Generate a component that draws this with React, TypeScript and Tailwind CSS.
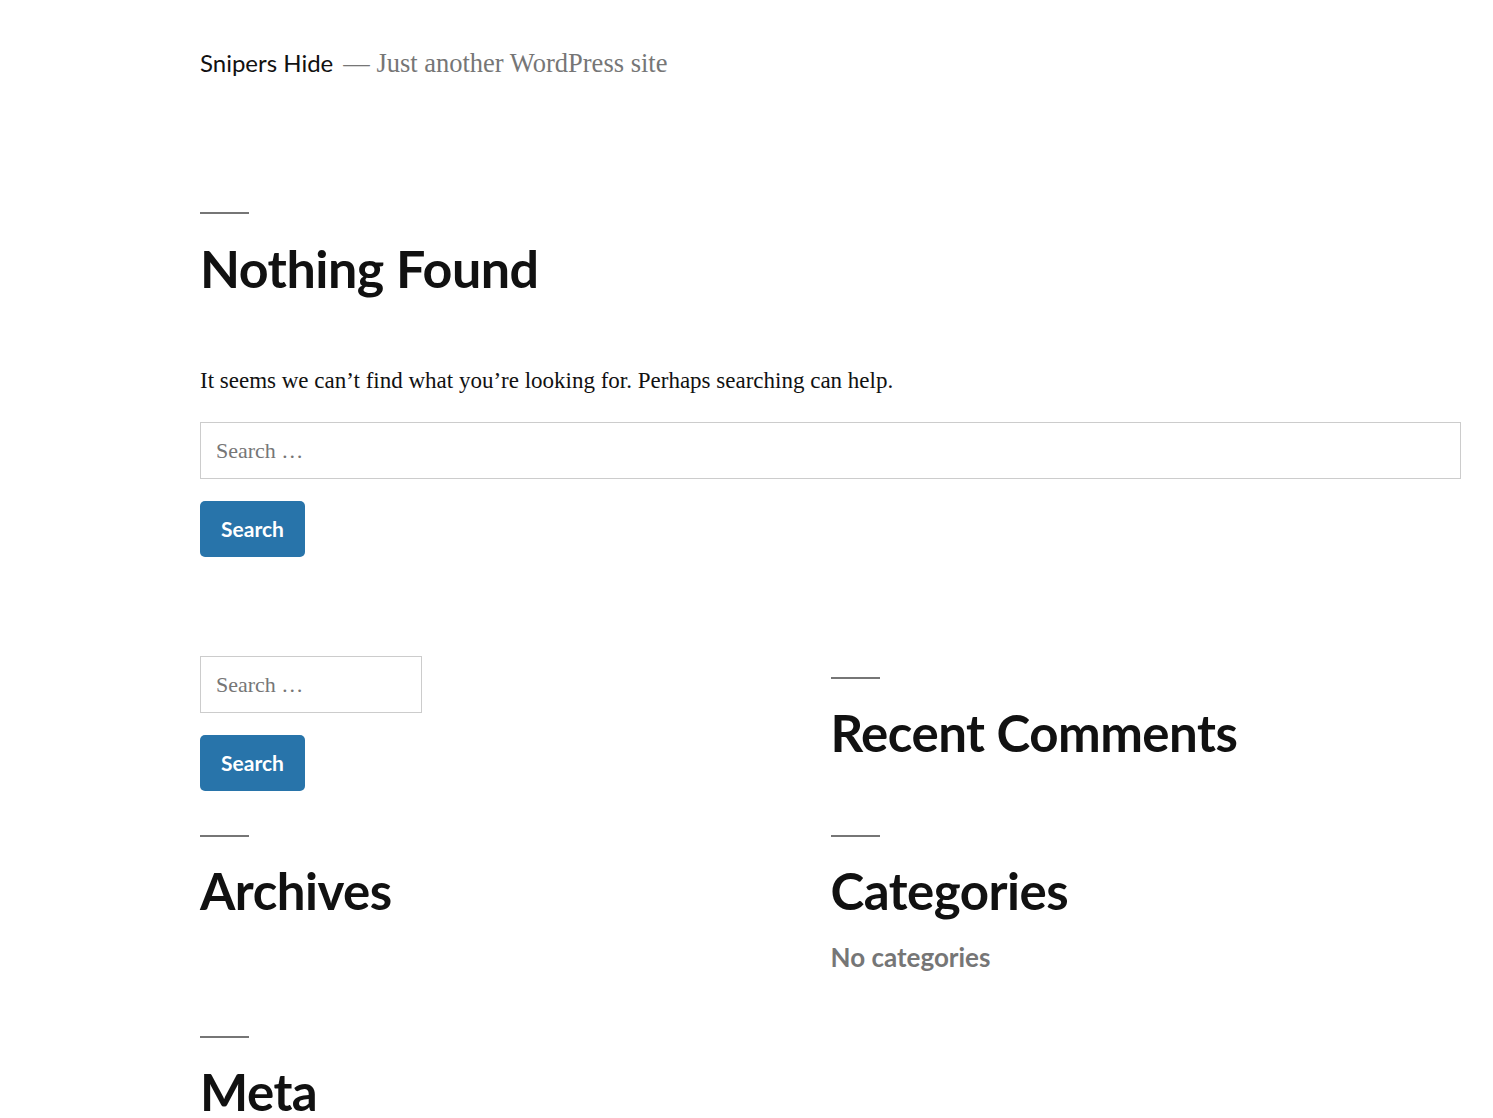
import React from "react";

const sans = "font-['Lato','Open_Sans',sans-serif]";
const serif = "font-['Liberation_Serif','Times_New_Roman',serif]";

function Rule() {
  return <div className="h-[2px] w-[49px] bg-[#767676]" />;
}

function WidgetTitle({ children }: { children: React.ReactNode }) {
  return (
    <h2 className={`${sans} mt-[24px] h-[60px] text-[51px] font-bold leading-[60px] text-[#111111] tracking-[-0.5px]`}>
      {children}
    </h2>
  );
}

function SearchForm({ full }: { full?: boolean }) {
  return (
    <form className="flex flex-col items-start" onSubmit={(e) => e.preventDefault()}>
      <input
        type="search"
        placeholder="Search …"
        className={`${serif} h-[57px] ${full ? "w-full" : "w-[222px]"} border border-[#cccccc] bg-white px-[15px] text-[22px] text-[#111] placeholder:text-[#767676] outline-none`}
      />
      <button
        type="submit"
        className={`${sans} mt-[22px] h-[56px] w-[105px] rounded-[5px] bg-[#2874aa] text-[21px] font-bold text-white`}
      >
        Search
      </button>
    </form>
  );
}

export default function App() {
  return (
    <div className="min-h-[1118px] w-full bg-white pl-[200px] pr-[32px]">
      <header className="pt-[47px]">
        <p className="flex items-baseline leading-[32px]">
          <span className={`${sans} text-[24px] text-[#111111]`}>Snipers Hide</span>
          <span className={`${serif} ml-[10px] text-[26.5px] text-[#767676]`}>— Just another WordPress site</span>
        </p>
      </header>

      <main>
        <div className="mt-[133px]">
          <Rule />
        </div>
        <h1 className={`${sans} mt-[24px] h-[60px] text-[52px] font-bold leading-[60px] text-[#111111] tracking-[-0.5px]`}>
          Nothing Found
        </h1>
        <p className={`${serif} mt-[67px] text-[23px] leading-[32px] text-[#111111]`}>
          It seems we can’t find what you’re looking for. Perhaps searching can help.
        </p>
        <div className="mt-[25px]">
          <SearchForm full />
        </div>
      </main>

      <aside className="mt-[99px] grid grid-cols-2">
        <div className="pb-[23px]">
          <SearchForm />
        </div>
        <div className="pt-[21px]">
          <Rule />
          <WidgetTitle>Recent Comments</WidgetTitle>
        </div>

        <div className="pt-[21px]">
          <Rule />
          <WidgetTitle>Archives</WidgetTitle>
        </div>
        <div className="pt-[21px]">
          <Rule />
          <WidgetTitle>Categories</WidgetTitle>
          <ul className="mt-[20px]">
            <li className={`${sans} text-[26px] font-bold leading-[32px] text-[#767676]`}>No categories</li>
          </ul>
          <div className="h-[42px]" />
        </div>

        <div className="pt-[21px]">
          <Rule />
          <WidgetTitle>Meta</WidgetTitle>
        </div>
      </aside>
    </div>
  );
}
